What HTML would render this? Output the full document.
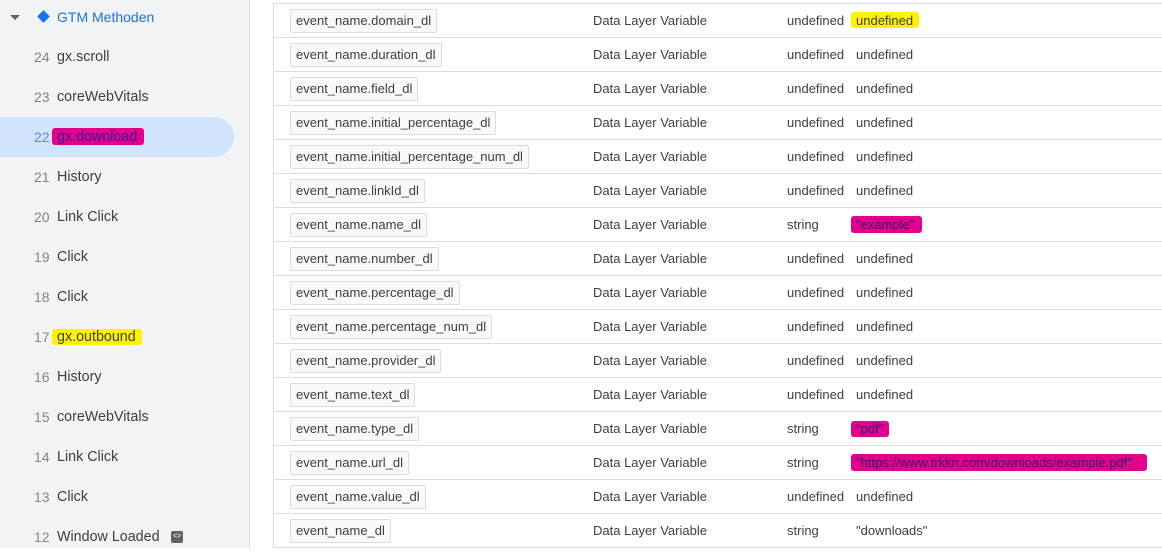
<!DOCTYPE html><html><head><style>
body{margin:0;width:1162px;height:548px;overflow:hidden;background:#fff;font-family:"Liberation Sans",Arial,sans-serif;position:relative}
.sb{position:absolute;left:0;top:0;width:249px;height:548px;background:#f1f3f4;border-right:1px solid #dadce0}
.it{position:absolute;left:0;height:40px;line-height:40px;font-size:14.3px;color:#3c4043}
.it .n{position:absolute;left:34px;color:#80868b;font-size:14px}
.it .l{position:absolute;left:57px;white-space:nowrap}
.sel{position:absolute;left:0;top:117px;width:234px;height:40px;background:#d2e3fc;border-radius:0 20px 20px 0}
.hl{position:absolute;border-radius:3px}
.tbl{position:absolute;left:273px;top:3px;width:889px;border-left:1px solid #dadce0;border-top:1px solid #dadce0}
.r{position:relative;height:33px;border-bottom:1px solid #dadce0;font-size:13px;color:#3c4043}
.c{position:absolute;left:16px;top:5px;height:22px;line-height:22px;padding:0 5px;background:#f8f9fa;border:1px solid #dadce0;border-radius:2px;color:#3c4043}
.t{position:absolute;left:319px;top:9px}
.y{position:absolute;left:513px;top:9px}
.v{position:absolute;left:582px;top:9px;white-space:nowrap}
</style></head><body>
<div class="sb">
<div style="position:absolute;left:10px;top:15px;width:0;height:0;border-left:5px solid transparent;border-right:5px solid transparent;border-top:5px solid #5f6368"></div>
<div style="position:absolute;left:39px;top:12px;width:9px;height:9px;background:#1a73e8;transform:rotate(45deg)"></div>
<div style="position:absolute;left:57px;top:9px;font-size:14px;color:#1a73e8">GTM Methoden</div>
<div class="sel"></div>
<div class="hl" style="left:52px;top:128px;width:92px;height:17px;background:#e3008c"></div>
<div class="hl" style="left:52px;top:329px;width:90px;height:16px;background:#fff200"></div>
<div class="it" style="top:37px"><span class="n">24</span><span class="l">gx.scroll</span></div>
<div class="it" style="top:77px"><span class="n">23</span><span class="l">coreWebVitals</span></div>
<div class="it" style="top:117px"><span class="n" style="color:#5b8ad8">22</span><span class="l" style="color:#3a1a9a">gx.download</span></div>
<div class="it" style="top:157px"><span class="n">21</span><span class="l">History</span></div>
<div class="it" style="top:197px"><span class="n">20</span><span class="l">Link Click</span></div>
<div class="it" style="top:237px"><span class="n">19</span><span class="l">Click</span></div>
<div class="it" style="top:277px"><span class="n">18</span><span class="l">Click</span></div>
<div class="it" style="top:317px"><span class="n">17</span><span class="l">gx.outbound</span></div>
<div class="it" style="top:357px"><span class="n">16</span><span class="l">History</span></div>
<div class="it" style="top:397px"><span class="n">15</span><span class="l">coreWebVitals</span></div>
<div class="it" style="top:437px"><span class="n">14</span><span class="l">Link Click</span></div>
<div class="it" style="top:477px"><span class="n">13</span><span class="l">Click</span></div>
<div class="it" style="top:517px"><span class="n">12</span><span class="l">Window Loaded</span></div>
<div style="position:absolute;left:171px;top:531px;width:12px;height:12px;background:#5f6368;border-radius:2px;color:#fff;font-size:7px;line-height:12px;text-align:center">&lt;&gt;</div>
</div>
<div class="hl" style="left:851px;top:12px;width:68px;height:16px;background:#fff200"></div>
<div class="hl" style="left:851px;top:216px;width:71px;height:17px;background:#e3008c"></div>
<div class="hl" style="left:851px;top:421px;width:38px;height:16px;background:#e3008c"></div>
<div class="hl" style="left:851px;top:454px;width:296px;height:17px;background:#e3008c"></div>
<div class="tbl">
<div class="r"><span class="c">event_name.domain_dl</span><span class="t">Data Layer Variable</span><span class="y">undefined</span><span class="v">undefined</span></div>
<div class="r"><span class="c">event_name.duration_dl</span><span class="t">Data Layer Variable</span><span class="y">undefined</span><span class="v">undefined</span></div>
<div class="r"><span class="c">event_name.field_dl</span><span class="t">Data Layer Variable</span><span class="y">undefined</span><span class="v">undefined</span></div>
<div class="r"><span class="c">event_name.initial_percentage_dl</span><span class="t">Data Layer Variable</span><span class="y">undefined</span><span class="v">undefined</span></div>
<div class="r"><span class="c">event_name.initial_percentage_num_dl</span><span class="t">Data Layer Variable</span><span class="y">undefined</span><span class="v">undefined</span></div>
<div class="r"><span class="c">event_name.linkId_dl</span><span class="t">Data Layer Variable</span><span class="y">undefined</span><span class="v">undefined</span></div>
<div class="r"><span class="c">event_name.name_dl</span><span class="t">Data Layer Variable</span><span class="y">string</span><span class="v" style="color:#3a1a6a">"example"</span></div>
<div class="r"><span class="c">event_name.number_dl</span><span class="t">Data Layer Variable</span><span class="y">undefined</span><span class="v">undefined</span></div>
<div class="r"><span class="c">event_name.percentage_dl</span><span class="t">Data Layer Variable</span><span class="y">undefined</span><span class="v">undefined</span></div>
<div class="r"><span class="c">event_name.percentage_num_dl</span><span class="t">Data Layer Variable</span><span class="y">undefined</span><span class="v">undefined</span></div>
<div class="r"><span class="c">event_name.provider_dl</span><span class="t">Data Layer Variable</span><span class="y">undefined</span><span class="v">undefined</span></div>
<div class="r"><span class="c">event_name.text_dl</span><span class="t">Data Layer Variable</span><span class="y">undefined</span><span class="v">undefined</span></div>
<div class="r"><span class="c">event_name.type_dl</span><span class="t">Data Layer Variable</span><span class="y">string</span><span class="v" style="color:#3a1a6a">"pdf"</span></div>
<div class="r"><span class="c">event_name.url_dl</span><span class="t">Data Layer Variable</span><span class="y">string</span><span class="v" style="color:#3a1a6a">"https://www.trkkn.com/downloads/example.pdf"</span></div>
<div class="r"><span class="c">event_name.value_dl</span><span class="t">Data Layer Variable</span><span class="y">undefined</span><span class="v">undefined</span></div>
<div class="r"><span class="c">event_name_dl</span><span class="t">Data Layer Variable</span><span class="y">string</span><span class="v">"downloads"</span></div>
</div>
</body></html>
